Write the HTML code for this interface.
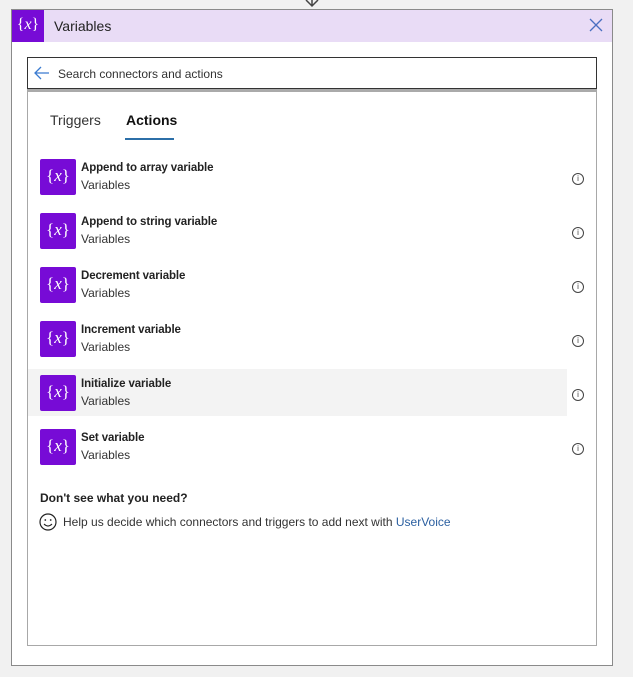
<!DOCTYPE html><html><head><style>
body{margin:0;width:633px;height:677px;background:#f1f1f1;font-family:"Liberation Sans",sans-serif;position:relative;overflow:hidden;color:#222}
.a{position:absolute}
.ic{position:absolute;left:40px;width:36px;height:36px;background:#770bd6;border-radius:2px;color:#fff;font:17px "Liberation Serif",serif;text-align:center;line-height:34px}
.t{position:absolute;left:81px;font-size:11.5px;font-weight:bold;color:#222;letter-spacing:-0.1px}
.s{position:absolute;left:81px;font-size:12px;color:#333}
.i{position:absolute;left:572px;width:10px;height:10px;border:1px solid #444;border-radius:50%;font-size:8px;text-align:center;line-height:10px;color:#444}
</style></head><body>
<svg class="a" style="left:303px;top:0" width="18" height="10"><path d="M3 0 L9 6 L15 0 M9 0 V6" stroke="#444" stroke-width="1.5" fill="none"/></svg>
<div class="a" style="left:11px;top:9px;width:600px;height:655px;border:1px solid #8a8a8a;background:#fff"></div>
<div class="a" style="left:12px;top:10px;width:600px;height:32px;background:#e9dcf6"></div>
<div class="a" style="left:12px;top:10px;width:32px;height:32px;background:#770bd6;color:#fff;font:16px 'Liberation Serif',serif;text-align:center;line-height:30px">{<i>x</i>}</div>
<div class="a" style="left:54px;top:18px;font-size:14px;color:#222">Variables</div>
<svg class="a" style="left:589px;top:18px" width="14" height="14"><path d="M1 1L13 13M13 1L1 13" stroke="#4a6fc0" stroke-width="1.3"/></svg>
<div class="a" style="left:27px;top:57px;width:568px;height:30px;border:1px solid #333;background:#fff"></div>
<svg class="a" style="left:34px;top:66px" width="16" height="14"><path d="M15 7H2M7 1L1 7L7 13" stroke="#3a7bd0" stroke-width="1.3" fill="none"/></svg>
<div class="a" style="left:58px;top:67px;font-size:12px;color:#333">Search connectors and actions</div>
<div class="a" style="left:27px;top:89px;width:568px;height:553px;border:1px solid #a8a8a8;border-top:3px solid #aaa;background:#fff"></div>
<div class="a" style="left:50px;top:112px;font-size:14px;color:#333">Triggers</div>
<div class="a" style="left:126px;top:112px;font-size:14px;color:#111;font-weight:bold">Actions</div>
<div class="a" style="left:125px;top:138px;width:49px;height:2px;background:#2c6fa8"></div>
<div class="a" style="left:28px;top:369px;width:539px;height:47px;background:#f3f3f3"></div>
<div class="ic" style="top:159px">{<i>x</i>}</div><div class="t" style="top:162px">Append to array variable</div><div class="s" style="top:178px">Variables</div><div class="i" style="top:173px">i</div>
<div class="ic" style="top:213px">{<i>x</i>}</div><div class="t" style="top:216px">Append to string variable</div><div class="s" style="top:232px">Variables</div><div class="i" style="top:227px">i</div>
<div class="ic" style="top:267px">{<i>x</i>}</div><div class="t" style="top:270px">Decrement variable</div><div class="s" style="top:286px">Variables</div><div class="i" style="top:281px">i</div>
<div class="ic" style="top:321px">{<i>x</i>}</div><div class="t" style="top:324px">Increment variable</div><div class="s" style="top:340px">Variables</div><div class="i" style="top:335px">i</div>
<div class="ic" style="top:375px">{<i>x</i>}</div><div class="t" style="top:378px">Initialize variable</div><div class="s" style="top:394px">Variables</div><div class="i" style="top:389px">i</div>
<div class="ic" style="top:429px">{<i>x</i>}</div><div class="t" style="top:432px">Set variable</div><div class="s" style="top:448px">Variables</div><div class="i" style="top:443px">i</div>
<div class="a" style="left:40px;top:491px;font-size:12px;font-weight:bold;color:#222">Don't see what you need?</div>
<svg class="a" style="left:39px;top:513px" width="18" height="18"><circle cx="9" cy="9" r="8" stroke="#222" fill="none" stroke-width="1.2"/><circle cx="6.3" cy="7" r="0.9" fill="#222"/><circle cx="11.7" cy="7" r="0.9" fill="#222"/><path d="M5 11 Q9 15 13 11" stroke="#222" fill="none" stroke-width="1.1"/></svg>
<div class="a" style="left:63px;top:515px;font-size:12px;color:#333">Help us decide which connectors and triggers to add next with <span style="color:#2b5fa0">UserVoice</span></div>
</body></html>
